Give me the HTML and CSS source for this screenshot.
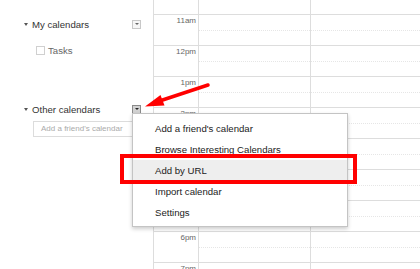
FILE: index.html
```html
<!DOCTYPE html>
<html lang="en">
<head>
  <meta charset="UTF-8">
  <title>Calendar</title>
  <link rel="stylesheet" href="styles.css">
</head>
<body>
  <div class="app">
    <div class="sidebar">
      <div class="section-head">
        <span class="caret"></span>
        <span class="section-title">My calendars</span>
        <span class="drop-btn"><span></span></span>
      </div>
      <div class="cal-item">
        <span class="check"></span>
        <span>Tasks</span>
      </div>
      <div class="section-head other">
        <span class="caret"></span>
        <span class="section-title">Other calendars</span>
        <span class="drop-btn pressed"><span></span></span>
      </div>
      <div class="friend-input">Add a friend's calendar</div>
    </div>
    <div class="grid">
      <div class="grid-inner">
        <div class="times">
          <div class="hour"></div>
          <div class="hour">11am</div>
          <div class="hour">12pm</div>
          <div class="hour">1pm</div>
          <div class="hour">2pm</div>
          <div class="hour">3pm</div>
          <div class="hour">4pm</div>
          <div class="hour">5pm</div>
          <div class="hour">6pm</div>
          <div class="hour">7pm</div>
        </div>
        <div class="day"></div>
        <div class="day"></div>
      </div>
    </div>
  </div>

  <div class="menu">
    <div class="menu-item">Add a friend's calendar</div>
    <div class="menu-item">Browse Interesting Calendars</div>
    <div class="menu-item hover">Add by URL</div>
    <div class="menu-item">Import calendar</div>
    <div class="menu-item">Settings</div>
  </div>

  <div class="mark-box"></div>

  <svg class="arrow" width="420" height="269" viewBox="0 0 420 269">
    <line x1="208" y1="85" x2="158" y2="101.5" stroke="#f00" stroke-width="3.5" stroke-linecap="round"/>
    <polygon points="145,106.5 160.5,95 164.5,105.5" fill="#f00"/>
  </svg>

  <script>
    document.querySelectorAll('.day').forEach(function (day) {
      for (let i = 0; i < 10; i++) {
        day.insertAdjacentHTML('beforeend', '<div class="slot"><div class="half"></div><div class="half"></div></div>');
      }
    });
  </script>
</body>
</html>
```

FILE: styles.css
```css
body {
  margin: 0;
  width: 420px;
  height: 269px;
  overflow: hidden;
  background: #fff;
  font-family: "Liberation Sans", Arial, sans-serif;
  position: relative;
}
.app {
  display: flex;
  height: 269px;
}
.sidebar {
  width: 153px;
  flex: none;
  padding-top: 17px;
  box-sizing: border-box;
}
.section-head {
  display: flex;
  align-items: center;
  height: 14px;
  padding: 0 12px 0 24px;
  color: #333;
  font-size: 9.6px;
}
.section-head.other {
  margin-top: 45px;
}
.caret {
  width: 0;
  height: 0;
  border-left: 2.5px solid transparent;
  border-right: 2.5px solid transparent;
  border-top: 3px solid #555;
  margin-right: 4px;
}
.drop-btn {
  margin-left: auto;
  width: 9px;
  height: 9px;
  box-sizing: border-box;
  border: 1px solid #c8c8c8;
  background: #f6f6f6;
  display: flex;
  align-items: center;
  justify-content: center;
}
.drop-btn span {
  width: 0;
  height: 0;
  border-left: 2px solid transparent;
  border-right: 2px solid transparent;
  border-top: 2.5px solid #666;
}
.drop-btn.pressed {
  border-color: #8a8a8a;
  background: #d2d2d2;
}
.drop-btn.pressed span {
  border-top-color: #222;
}
.cal-item {
  display: flex;
  align-items: center;
  height: 14px;
  margin-top: 12px;
  padding-left: 36px;
  color: #666;
  font-size: 9.6px;
}
.check {
  width: 9px;
  height: 9px;
  box-sizing: border-box;
  border: 1px solid #d0d0d0;
  margin-right: 3px;
}
.friend-input {
  margin: 5px 0 0 33px;
  width: 110px;
  height: 16px;
  box-sizing: border-box;
  border: 1px solid #dcdcdc;
  padding-left: 7px;
  color: #aaa;
  font-size: 8px;
  line-height: 14px;
  white-space: nowrap;
  overflow: hidden;
}
.grid {
  flex: 1;
  overflow: hidden;
}
.grid-inner {
  display: flex;
  margin-top: -16px;
}
.times {
  width: 44px;
  flex: none;
  border-left: 1px solid #ddd;
  border-right: 1px solid #ddd;
}
.hour {
  height: 29px;
  padding-top: 1px;
  padding-right: 2px;
  border-bottom: 1px solid #ddd;
  text-align: right;
  font-size: 8px;
  line-height: 10px;
  color: #666;
}
.day {
  width: 111px;
  flex: none;
  border-right: 1px solid #ddd;
}
.half {
  height: 15px;
  border-bottom: 1px dotted #e6e6e6;
}
.half + .half {
  height: 14px;
  border-bottom: 1px solid #ddd;
}
.menu {
  position: absolute;
  left: 132px;
  top: 113px;
  width: 216px;
  box-sizing: border-box;
  padding: 4px 0 3px;
  background: #fff;
  border: 1px solid #c4c4c4;
  box-shadow: 0 2px 4px rgba(0, 0, 0, 0.2);
}
.menu-item {
  height: 21px;
  line-height: 21px;
  padding-left: 22px;
  font-size: 9.6px;
  color: #222;
}
.menu-item.hover {
  background: #eee;
}
.mark-box {
  position: absolute;
  left: 120px;
  top: 154px;
  width: 237px;
  height: 30px;
  box-sizing: border-box;
  border: 4px solid #f00;
}
.arrow {
  position: absolute;
  left: 0;
  top: 0;
}
```
